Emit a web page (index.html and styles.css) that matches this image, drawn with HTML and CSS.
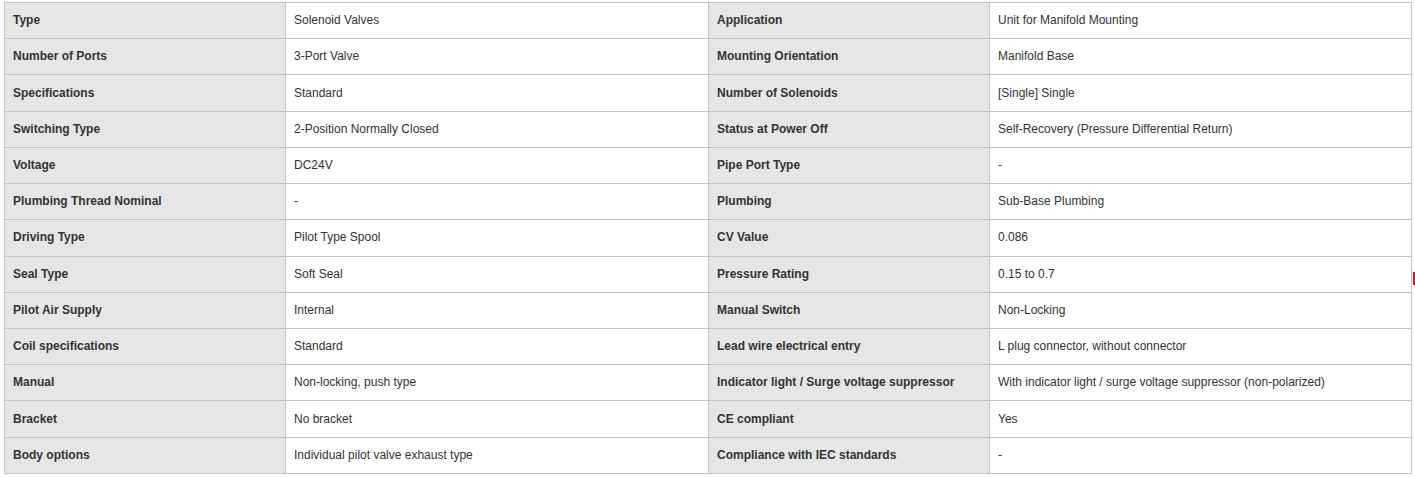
FILE: index.html
```html
<!DOCTYPE html>
<html>
<head>
<meta charset="utf-8">
<link rel="stylesheet" href="styles.css">
</head>
<body>
<table class="spec">
<colgroup><col class="c-l"><col class="c-v"><col class="c-l"><col class="c-v2"></colgroup>
<tbody>
<tr><th>Type</th><td>Solenoid Valves</td><th>Application</th><td>Unit for Manifold Mounting</td></tr>
<tr><th>Number of Ports</th><td>3-Port Valve</td><th>Mounting Orientation</th><td>Manifold Base</td></tr>
<tr><th>Specifications</th><td>Standard</td><th>Number of Solenoids</th><td>[Single] Single</td></tr>
<tr><th>Switching Type</th><td>2-Position Normally Closed</td><th>Status at Power Off</th><td>Self-Recovery (Pressure Differential Return)</td></tr>
<tr><th>Voltage</th><td>DC24V</td><th>Pipe Port Type</th><td>-</td></tr>
<tr><th>Plumbing Thread Nominal</th><td>-</td><th>Plumbing</th><td>Sub-Base Plumbing</td></tr>
<tr><th>Driving Type</th><td>Pilot Type Spool</td><th>CV Value</th><td>0.086</td></tr>
<tr><th>Seal Type</th><td>Soft Seal</td><th>Pressure Rating</th><td>0.15 to 0.7</td></tr>
<tr><th>Pilot Air Supply</th><td>Internal</td><th>Manual Switch</th><td>Non-Locking</td></tr>
<tr><th>Coil specifications</th><td>Standard</td><th>Lead wire electrical entry</th><td>L plug connector, without connector</td></tr>
<tr><th>Manual</th><td>Non-locking, push type</td><th>Indicator light / Surge voltage suppressor</th><td>With indicator light / surge voltage suppressor (non-polarized)</td></tr>
<tr><th>Bracket</th><td>No bracket</td><th>CE compliant</th><td>Yes</td></tr>
<tr><th>Body options</th><td>Individual pilot valve exhaust type</td><th>Compliance with IEC standards</th><td>-</td></tr>
</tbody>
</table>
<div class="edge-mark"></div>
</body>
</html>
```
FILE: styles.css
```css
html, body {
  margin: 0;
  padding: 0;
  background: #ffffff;
}
body {
  padding: 2px 4px 0 4px;
  font-family: "Liberation Sans", Arial, sans-serif;
  font-size: 12px;
  color: #333333;
  position: relative;
}
.spec {
  width: 1407px;
  border-collapse: collapse;
  table-layout: fixed;
}
.c-l { width: 281px; }
.c-v { width: 423px; }
.c-v2 { width: 422px; }
.spec tr {
  height: 36.23px;
}
.spec th, .spec td {
  border: 1px solid #c4c4c4;
  padding: 0 8px;
  text-align: left;
  vertical-align: middle;
  line-height: 15px;
}
.spec th {
  background: #e6e6e6;
  font-weight: bold;
  color: #333333;
}
.spec td {
  background: #ffffff;
  font-weight: normal;
}
.edge-mark {
  position: absolute;
  left: 1413px;
  top: 272px;
  width: 2px;
  height: 13px;
  background: #d9191e;
}
```
